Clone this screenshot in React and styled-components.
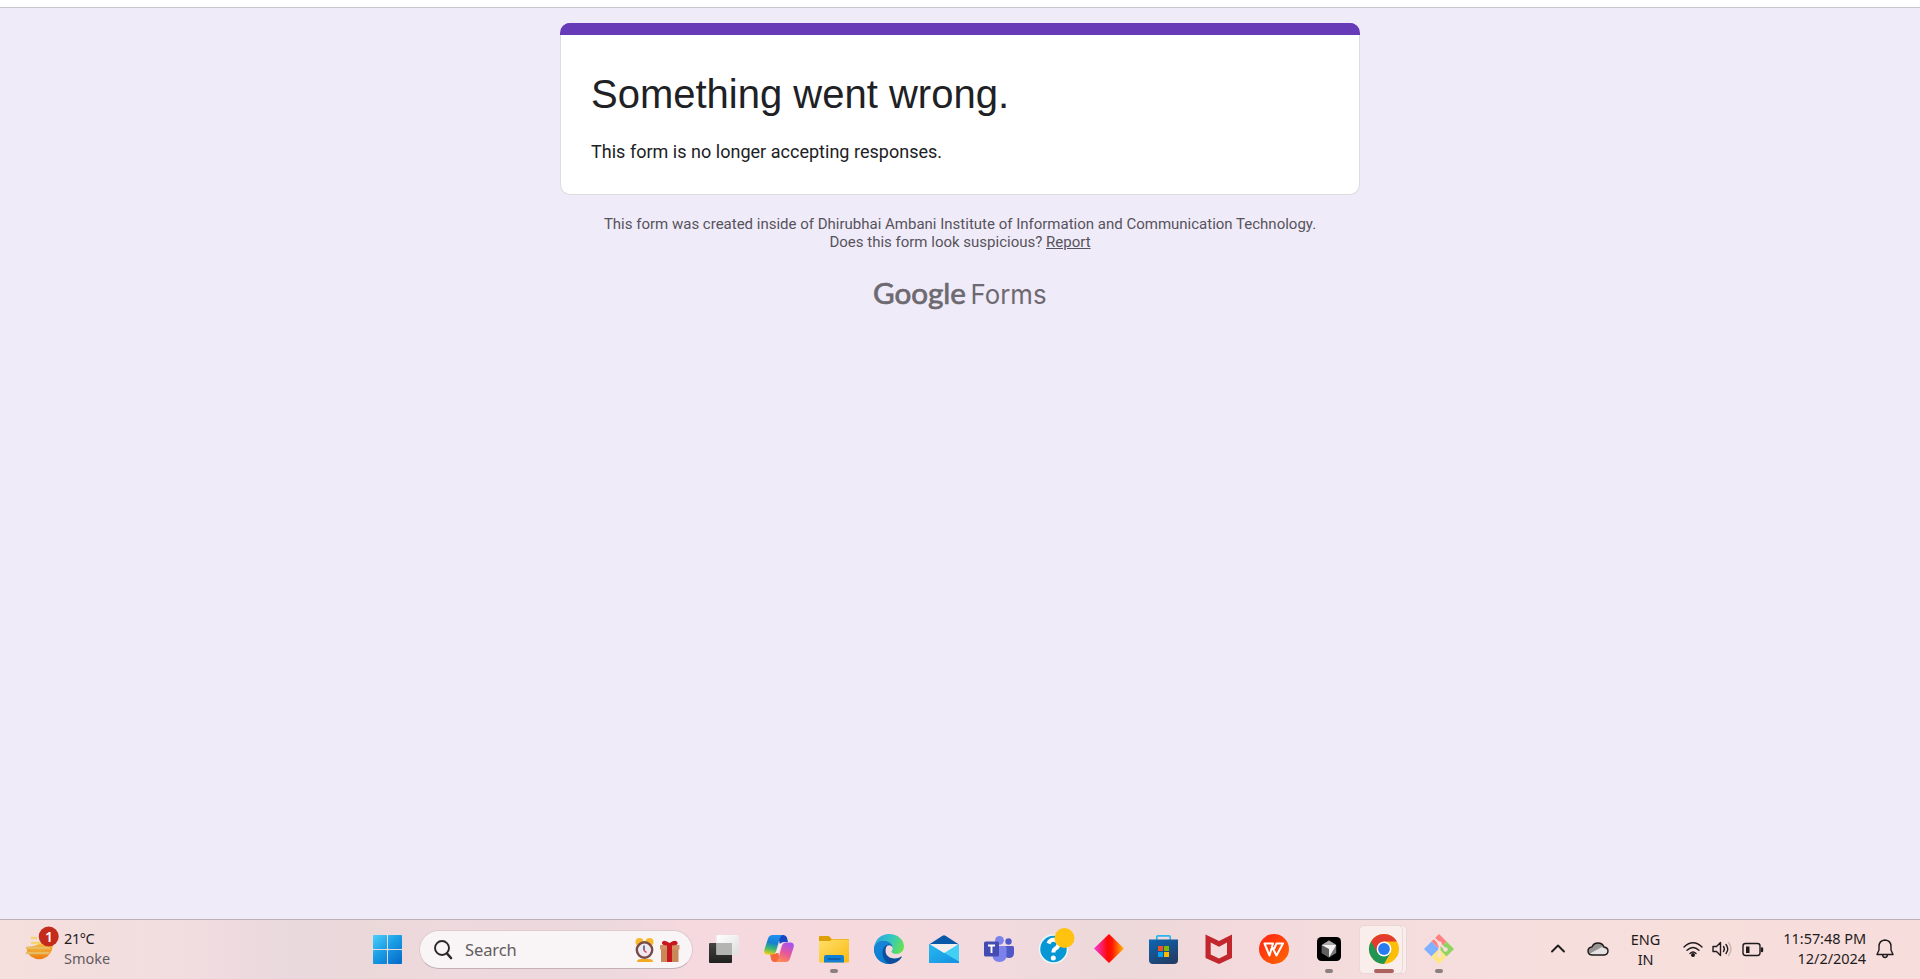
import React from "react";
import styled, { createGlobalStyle } from "styled-components";

const GlobalStyle = createGlobalStyle`
  * { box-sizing: border-box; }
  body { margin: 0; background: #f0ebf8; overflow: hidden; }
`;

const Screen = styled.div`
  display: flex;
  flex-direction: column;
  height: 979px;
  width: 1920px;
`;

const BrowserEdge = styled.div`
  height: 8px;
  flex: none;
  background: #fff;
  border-bottom: 1px solid #c9c6ce;
`;

const Page = styled.main`
  flex: 1;
  display: flex;
  flex-direction: column;
  align-items: center;
  padding-top: 15px;
  background: #f0ebf8;
  font-family: Roboto, "Liberation Sans", sans-serif;
`;

const Card = styled.section`
  width: 800px;
  height: 172px;
  background: #fff;
  border: 1px solid #dadce0;
  border-top: 12px solid #673ab7;
  border-radius: 10px;
  padding: 34px 30px 0;
  color: #202124;
  position: relative;
`;

const CardAccent = styled.div`
  position: absolute;
  top: -12px;
  left: -1px;
  right: -1px;
  height: 12px;
  background: #673ab7;
  border-radius: 10px 10px 0 0;
`;

const Title = styled.h1`
  margin: 0;
  font: 400 40px/50px "Liberation Sans", Arial, sans-serif;
  white-space: nowrap;
`;

const Message = styled.p`
  margin: 20px 0 0;
  font-size: 18px;
  line-height: 26px;
  letter-spacing: 0.02px;
  white-space: nowrap;
`;

const Notice = styled.p`
  margin: 20px 0 0;
  font-size: 15px;
  line-height: 18px;
  text-align: center;
  color: #56535c;
`;

const ReportLink = styled.a`
  color: inherit;
  text-decoration: underline;
`;

const Logo = styled.svg`
  display: block;
  margin-top: 20px;
  fill: #6c6971;
`;

const Taskbar = styled.footer`
  height: 60px;
  flex: none;
  display: flex;
  border-top: 1px solid #bfb0b5;
  background: linear-gradient(90deg, #f5e0dd 0, #f1dce0 200px, #e9d8dd 290px, #ebd8d9 370px, #eed9dd 440px, #ecd9dd 600px, #f5d9df 690px, #f6d9dd 850px, #f2dade 1000px, #ecd8d9 1120px, #f3d9dc 1230px, #f5dedd 1460px, #f7dfdc 1700px, #f7dddc 1920px);
  font-family: "Noto Sans", "Open Sans", sans-serif;
  font-size: 14.5px;
  color: #1f1b1c;
`;

const Weather = styled.div`
  width: 359px;
  display: flex;
  padding: 7px 0 0 24px;
`;

const WeatherIcon = styled.svg`
  flex: none;
  width: 40px;
  height: 42px;
  margin-top: -1px;
`;

const Lines = styled.div`
  display: flex;
  flex-direction: column;
  align-items: ${(p) => p.$align || "flex-start"};
  line-height: 20px;
  letter-spacing: -0.05px;
  white-space: nowrap;
`;

const WeatherText = styled(Lines)`
  padding-top: 1px;
  letter-spacing: -0.4px;
`;

const Muted = styled.span`
  color: #625b5d;
  letter-spacing: 0;
`;

const Apps = styled.nav`
  display: flex;
  align-items: center;
  height: 58px;
`;

const Slot = styled.div`
  position: relative;
  width: 55px;
  height: 58px;
  display: flex;
  align-items: center;
  justify-content: center;
`;

const AppIcon = styled.svg`
  display: block;
  position: relative;
  width: 32px;
  height: 32px;
`;

const Indicator = styled.i`
  position: absolute;
  bottom: 5px;
  width: ${(p) => (p.$active ? 20 : 8)}px;
  height: 4px;
  border-radius: 2px;
  background: ${(p) => (p.$active ? "#ad625f" : "#8b7f81")};
`;

const ActivePlate = styled.i`
  position: absolute;
  top: 5px;
  left: ${(p) => p.$left}px;
  width: ${(p) => p.$width}px;
  height: 49px;
  border: 1px solid #ead6d5;
  border-radius: 5px;
  background: #faeeec;
`;

const Search = styled.div`
  width: 274px;
  height: 39px;
  margin: 1px 3px 0 5px;
  display: flex;
  align-items: center;
  padding: 0 12px 0 13px;
  border: 1px solid #dfcace;
  border-bottom-color: #c3b2b5;
  border-radius: 20px;
  background: #f9f4f5;
  font-size: 16.5px;
  letter-spacing: -0.1px;
  color: #625d5e;
`;

const SearchLabel = styled.span`
  flex: 1;
  margin-left: 12px;
`;

const Tray = styled.div`
  margin-left: auto;
  height: 58px;
  display: flex;
  align-items: center;
  padding-right: 23px;
`;

const TrayIcon = styled.svg`
  flex: none;
  display: block;
  width: 24px;
  height: 24px;
  margin-left: ${(p) => p.$gap || 0}px;
  fill: none;
  stroke: #1f1b1c;
  stroke-width: 1.4;
  stroke-linecap: round;
  stroke-linejoin: round;
`;

const TrayText = styled(Lines)`
  margin-left: ${(p) => p.$gap}px;
  padding-bottom: ${(p) => p.$lift || 0}px;
`;

const StartIcon = () => (
  <AppIcon viewBox="0 0 32 32">
    <defs>
      <linearGradient id="win" gradientUnits="userSpaceOnUse" x1="1" y1="1" x2="26" y2="31">
        <stop offset="0" stopColor="#52d3fb" /><stop offset=".5" stopColor="#1a9ee6" /><stop offset="1" stopColor="#0670cd" />
      </linearGradient>
    </defs>
    <g fill="url(#win)">
      <rect x="2" y="2" width="14" height="14" rx=".8" /><rect x="17" y="2" width="14" height="14" rx=".8" />
      <rect x="2" y="17" width="14" height="14" rx=".8" /><rect x="17" y="17" width="14" height="14" rx=".8" />
    </g>
  </AppIcon>
);

const TaskViewIcon = () => (
  <AppIcon viewBox="0 0 32 32">
    <defs>
      <linearGradient id="tvd" x2="0" y2="1"><stop stopColor="#444543" /><stop offset="1" stopColor="#20211f" /></linearGradient>
      <linearGradient id="tvl" x2="1" y2="1"><stop stopColor="#fff" /><stop offset="1" stopColor="#dedede" /></linearGradient>
    </defs>
    <rect x="1" y="10" width="23" height="20" rx="1" fill="url(#tvd)" />
    <rect x="8.500" y="2" width="22.500" height="20" rx="1" fill="url(#tvl)" />
    <path d="M8.500 10H24V22H8.500z" fill="#b4b5b3" />
  </AppIcon>
);

const CopilotIcon = () => (
  <AppIcon viewBox="0 0 32 32">
    <defs>
      <linearGradient id="cpa" x1=".5" y1="0" x2=".3" y2="1"><stop stopColor="#2090f0" /><stop offset=".4" stopColor="#1680cf" /><stop offset=".7" stopColor="#3fb873" /><stop offset="1" stopColor="#f0cf10" /></linearGradient>
      <linearGradient id="cpb" x1=".7" y1="0" x2=".3" y2="1"><stop stopColor="#a552f2" /><stop offset=".5" stopColor="#e4579e" /><stop offset="1" stopColor="#ff8a50" /></linearGradient>
    </defs>
    <path d="M15 2h5.500q2.500 0 3.400 2.600L25 9h-4q-3 0-4 3z" fill="#1747c4" />
    <path d="M17 29h-5.500q-2.500 0-3.300-2.600L7 21h4q3 0 4-3z" fill="#f4683c" />
    <path d="M9.500 2H19.500q-2 .6-2.800 3.500L13.300 17.500q-1 4-4.500 4H4.500Q.5 21.500 1.300 17L5 5.500Q6.200 2 9.500 2z" fill="url(#cpa)" />
    <path d="M22.500 29H12.500q2-.6 2.800-3.500L18.700 13.500q1-4 4.500-4h4.300Q31.500 9.500 30.700 14L27 25.500Q25.800 29 22.500 29z" fill="url(#cpb)" />
    <path d="M16.500 10.500h3q-1.500 1-2.200 3.500L15.500 20h-3q1.200-1.200 1.800-3z" fill="#fbe9ee" />
  </AppIcon>
);

const FolderIcon = () => (
  <AppIcon viewBox="0 0 32 32">
    <defs><linearGradient id="fld" x2="1" y2="1"><stop stopColor="#ffdf6a" /><stop offset="1" stopColor="#fabb12" /></linearGradient></defs>
    <path d="M1 4q0-1 1-1h8q1 0 2 1l1.500 2H30q1 0 1 1v5H1z" fill="#dea007" />
    <path d="M1 8h11l2-1.500h16q1 0 1 1V28.500q0 1-1 1H2q-1 0-1-1z" fill="url(#fld)" />
    <path d="M6 29.500V24q0-2 2-2h16q2 0 2 2v5.500z" fill="#1180d4" />
    <path d="M9.500 26H22.500" stroke="#0b4f93" strokeWidth="1.200" />
  </AppIcon>
);

const EdgeIcon = () => (
  <AppIcon viewBox="0 0 32 32">
    <defs>
      <linearGradient id="eg1" x1="0" y1=".3" x2="1" y2=".6"><stop stopColor="#27a6df" /><stop offset=".5" stopColor="#34c6c4" /><stop offset="1" stopColor="#66e34f" /></linearGradient>
      <linearGradient id="eg2" x2=".6" y2="1"><stop stopColor="#1988d8" /><stop offset="1" stopColor="#087cd2" /></linearGradient>
    </defs>
    <path d="M1.200 14C2.400 6 8.500 1 16 1c8.500 0 15 5.500 15 12.500 0 4.500-3.500 7.500-7.700 7.500-3 0-4.800-1.200-4.800-2.500 0-.8 1.200-1.200 1.200-3.300C19.700 12 16 8 10.500 8 6 8 3 10.500 1.200 14z" fill="url(#eg1)" />
    <path d="M28.700 24.200C26 28.500 21.300 31 16.300 31 8 31 1 24.600 1 16 1 11.500 5.500 8 10.500 8c5 0 9.200 3.300 9.200 7-.3-1.500-1.700-2.700-3.500-2.700C13 12.300 12.600 16 12.600 18c0 5 4.500 7.400 9 7.400 2.800 0 4.600-.7 6-1.600.7-.5 1.400-.1 1.100.4z" fill="#0b4f9e" />
    <path d="M16.300 31C8 31 1 24.600 1 16 1 11.500 5.500 8 10.500 8c3.500 0 6.800 1.700 8.300 4.300-1-.6-1.700-.9-2.600-.9-4.200.4-6.700 3.600-6.700 8.100C9.500 25 12 29 16.300 31z" fill="url(#eg2)" />
  </AppIcon>
);

const MailIcon = () => (
  <AppIcon viewBox="0 0 32 32">
    <defs><linearGradient id="ml" x2="1" y2="1"><stop stopColor="#28b9f0" /><stop offset="1" stopColor="#1390df" /></linearGradient></defs>
    <path d="M1 11.500L14.500 2.700q1.500-1 3 0L31 11.500z" fill="#0758a8" />
    <path d="M1 11L16 20 31 11V30H1z" fill="#41cff5" />
    <path d="M1 11L31 28.500V30H1z" fill="url(#ml)" />
    <path d="M2 11h28L16 20z" fill="#f1efee" />
  </AppIcon>
);

const TeamsIcon = () => (
  <AppIcon viewBox="0 0 32 32">
    <circle cx="25.500" cy="8.500" r="3.200" fill="#5059c9" />
    <path d="M21 13h8.500q1.500 0 1.500 1.500V20q0 5-5 5-3 0-5-2z" fill="#4f58c5" />
    <circle cx="16.500" cy="7.300" r="4.400" fill="#7b83eb" />
    <path d="M9.500 13H22q1.500 0 1.500 1.500V22q0 7-7 7t-7-7z" fill="#7b83eb" />
    <rect x="1" y="8.500" width="15" height="15" rx="1.500" fill="#444cb3" />
    <path d="M5 12.500h7M8.500 12.500V20" stroke="#fff" strokeWidth="1.900" />
  </AppIcon>
);

const HelpIcon = () => (
  <AppIcon viewBox="0 0 32 32" overflow="visible">
    <circle cx="15.500" cy="16" r="14" fill="#0797d5" stroke="#eef7fa" strokeWidth="1.500" />
    <path d="M10.500 10.500Q12 6.500 16 6.800t4.500 4.200q0 2.800-2.600 4.300T15.400 19.500" fill="none" stroke="#fff" strokeWidth="4" />
    <circle cx="15.300" cy="25" r="2.500" fill="#fff" />
    <circle cx="26.500" cy="5" r="10" fill="#ffc20e" />
  </AppIcon>
);

const DiamondIcon = () => (
  <AppIcon viewBox="0 0 32 32">
    <defs><linearGradient id="dm"><stop stopColor="#f43ae0" /><stop offset=".45" stopColor="#ff0808" /><stop offset=".6" stopColor="#ff1600" /><stop offset="1" stopColor="#ffbd0d" /></linearGradient></defs>
    <path d="M16 1L31 15.500 16 30 1 15.500z" fill="url(#dm)" />
  </AppIcon>
);

const StoreIcon = () => (
  <AppIcon viewBox="0 0 32 32">
    <defs><linearGradient id="st" x2=".6" y2="1"><stop stopColor="#0b67b5" /><stop offset="1" stopColor="#233e68" /></linearGradient></defs>
    <path d="M8.800 7V4q0-1.200 1.200-1.200h11q1.200 0 1.200 1.200v3" fill="none" stroke="#28b7ee" strokeWidth="1.700" />
    <path d="M1 6.500h29V27q0 4-4 4H5q-4 0-4-4z" fill="url(#st)" />
    <path d="M10 13h5v5h-5z" fill="#f25022" /><path d="M16 13h5v5h-5z" fill="#7fba00" />
    <path d="M10 19h5v5h-5z" fill="#00a4ef" /><path d="M16 19h5v5h-5z" fill="#ffb900" />
  </AppIcon>
);

const ShieldIcon = () => (
  <AppIcon viewBox="0 0 32 32">
    <path d="M2.500 1.500L16 8l13-6.500V25L16 31 2.500 25z" fill="#c1272d" />
    <path d="M7.700 9.500L16 13.700l8-4.200V21.500L16 25.400 7.700 21.500z" fill="#f4dada" />
  </AppIcon>
);

const WpsIcon = () => (
  <AppIcon viewBox="0 0 32 32">
    <defs><linearGradient id="wps" x2="1" y2="1"><stop stopColor="#ff2014" /><stop offset="1" stopColor="#ff6a00" /></linearGradient></defs>
    <circle cx="16" cy="16" r="15" fill="url(#wps)" />
    <path d="M6.500 10.500H15L11.500 22.500zM13.500 13L18.500 22.500 25 10.500H18.500L16 16" fill="none" stroke="#fff" strokeWidth="2" strokeLinejoin="round" />
  </AppIcon>
);

const CubeIcon = () => (
  <AppIcon viewBox="0 0 32 32">
    <rect x="4" y="4" width="24" height="24" rx="4.500" fill="#000" />
    <path d="M16 7.500L23.200 12v8L16 24.500 8.800 20v-8z" fill="#777" />
    <path d="M16 7.500L23.200 12H8.800z" fill="#aaa" />
    <path d="M8.800 12L16 16v8.500L8.800 20z" fill="#606060" />
    <path d="M8.800 12h14.400L16 24.500V16z" fill="#f2f2f2" />
  </AppIcon>
);

const ChromeIcon = () => (
  <AppIcon viewBox="0 0 32 32">
    <circle cx="16" cy="16" r="15" fill="#fbbf0b" />
    <path d="M16 16L3 8.500A15 15 0 0 0 16 31L22.500 19.800z" fill="#219653" />
    <path d="M16 16L9.500 19.800 3 8.500A15 15 0 0 1 29 8.500H16z" fill="#e33b2e" />
    <circle cx="16" cy="16" r="7.400" fill="#fff" /><circle cx="16" cy="16" r="5.900" fill="#297bf0" />
  </AppIcon>
);

const GitIcon = () => (
  <AppIcon viewBox="0 0 32 32">
    <path d="M16 1L23.500 8.500 16 16 8.500 8.500z" fill="#ff8080" />
    <path d="M23.500 8.500L31 16l-7.500 7.500L16 16z" fill="#8ed45e" />
    <path d="M8.500 8.500L16 16l-7.500 7.500L1 16z" fill="#80b0ff" />
    <path d="M16 16l7.500 7.500L16 31l-7.500-7.500z" fill="#ffe680" />
    <path d="M11 5l5.500 5.500V22M17 11l5.500 5.500" fill="none" stroke="#f7dfdd" strokeWidth="2" />
    <g fill="#f7dfdd"><circle cx="16.500" cy="10.500" r="2.200" /><circle cx="16.500" cy="22.500" r="2.200" /><circle cx="22.500" cy="16.500" r="2.200" /></g>
  </AppIcon>
);

const APPS = [
  { id: "taskview", Icon: TaskViewIcon },
  { id: "copilot", Icon: CopilotIcon },
  { id: "files", Icon: FolderIcon, running: true },
  { id: "edge", Icon: EdgeIcon },
  { id: "mail", Icon: MailIcon },
  { id: "teams", Icon: TeamsIcon },
  { id: "help", Icon: HelpIcon },
  { id: "diamond", Icon: DiamondIcon },
  { id: "store", Icon: StoreIcon },
  { id: "shield", Icon: ShieldIcon },
  { id: "wps", Icon: WpsIcon },
  { id: "cube", Icon: CubeIcon, running: true },
  { id: "chrome", Icon: ChromeIcon, running: true, active: true },
  { id: "git", Icon: GitIcon, running: true },
];

export default function App() {
  return (
    <Screen>
      <GlobalStyle />
      <BrowserEdge />
      <Page>
        <Card>
          <CardAccent />
          <Title>Something went wrong.</Title>
          <Message>This form is no longer accepting responses.</Message>
        </Card>
        <Notice>
          This form was created inside of Dhirubhai Ambani Institute of Information and Communication Technology.
          <br />
          Does this form look suspicious? <ReportLink>Report</ReportLink>
        </Notice>
        <Logo width="180" height="50" viewBox="0 0 180 50">
          <text x="3" y="32.500" fontFamily="Lato, sans-serif" fontSize="29.500" stroke="#6c6971" strokeWidth=".7" textLength="93" lengthAdjust="spacingAndGlyphs">Google</text>
          <text x="100.500" y="33" fontFamily="Inter, sans-serif" fontSize="26.500" textLength="76" lengthAdjust="spacingAndGlyphs">Forms</text>
        </Logo>
      </Page>
      <Taskbar>
        <Weather>
          <WeatherIcon viewBox="0 0 40 42">
            <defs><linearGradient id="sun" x2="0" y2="1"><stop stopColor="#f8c63d" /><stop offset="1" stopColor="#ef7b16" /></linearGradient></defs>
            <path d="M3 21Q16 20 18 14h11.500q0 11-6 16.500Q15 36 7 30.500Q4 28 3 25z" fill="url(#sun)" />
            <g strokeWidth="2.600" strokeLinecap="round" fill="none">
              <path d="M8 12h4M8 17h12" stroke="#f5d36d" />
              <path d="M3 22h22M3 27h21" stroke="#e6bd63" />
              <path d="M8 24.500h9" stroke="#f2a92b" strokeWidth="1.600" />
            </g>
            <circle cx="24.700" cy="10.500" r="10" fill="#c42b1c" />
            <text x="24.900" y="15.500" fontSize="14" fontWeight="600" fill="#fff" textAnchor="middle">1</text>
          </WeatherIcon>
          <WeatherText>
            <span>21°C</span>
            <Muted>Smoke</Muted>
          </WeatherText>
        </Weather>
        <Apps>
          <Slot><StartIcon /></Slot>
          <Search>
            <svg width="20" height="22" viewBox="0 0 20 22" fill="none" stroke="#292728" strokeLinecap="round">
              <circle cx="9" cy="9" r="7" strokeWidth="1.900" /><path d="M14 14.500L18 19" strokeWidth="2.600" />
            </svg>
            <SearchLabel>Search</SearchLabel>
            <svg width="46" height="26" viewBox="0 0 46 26">
              <g>
                <circle cx="5.500" cy="5" r="4" fill="#f8b92c" /><circle cx="15.500" cy="5" r="4" fill="#f8b92c" />
                <path d="M3 25q0-3 4-3h8q4 0 4 3z" fill="#f3aa20" />
                <circle cx="10.500" cy="13" r="7.700" fill="#efe9ef" stroke="#784b4b" strokeWidth="2.400" />
                <path d="M10 8.500v5" stroke="#333a55" strokeWidth="1.300" /><path d="M10 13.500l2.500 2" stroke="#e33d62" strokeWidth="1.600" />
              </g>
              <path d="M27 8h17.500v17H27z" fill="#c98858" /><path d="M26 8h19.500v4.500H26z" fill="#d29464" />
              <path d="M33 8h5v17h-5z" fill="#c9171e" />
              <path d="M35.500 8.500Q27 9 28 5.500T35.500 6Q42 2 43.500 5.500T35.500 8.500z" fill="#c9171e" />
            </svg>
          </Search>
          {APPS.map(({ id, Icon, running, active }) => (
            <Slot key={id}>
              {active && <ActivePlate $left={10} $width={41} />}
              {active && <ActivePlate $left={3} $width={44} />}
              <Icon />
              {running && <Indicator $active={active} />}
            </Slot>
          ))}
        </Apps>
        <Tray>
          <TrayIcon viewBox="0 0 24 24"><path d="M6 14.500L12 8.500l6 6" strokeWidth="1.900" /></TrayIcon>
          <TrayIcon $gap={16} viewBox="0 0 24 24">
            <path d="M6.500 18q-4.500 0-4.500-4 0-3.500 4-4 1.500-4 6-4t6 4q4 .5 4 4t-4 4z" fill="#979494" stroke="none" />
            <path d="M4 16.500L16 10l5.500 3v4L18 18.500H6z" fill="#e6e2e2" stroke="none" />
            <path d="M6.500 18q-4.500 0-4.500-4 0-3.500 4-4 1.500-4 6-4t6 4q4 .5 4 4t-4 4z" />
          </TrayIcon>
          <TrayText $gap={21} $align="center"><span>ENG</span><span>IN</span></TrayText>
          <TrayIcon $gap={21} viewBox="0 0 24 24">
            <path d="M3 10Q12 1.500 21 10M6 13.300q6-5.600 12 0M9 16.500q3-3 6 0" /><circle cx="12" cy="18" r="1.300" fill="#1f1b1c" />
          </TrayIcon>
          <TrayIcon $gap={5} viewBox="0 0 24 24">
            <path d="M3 9.500h3.500L10.500 5.500v13L6.500 14.500H3z" /><path d="M13.500 9.500q1.800 2.500 0 5M16 7.500q3.500 4.500 0 9" /><path d="M18.500 5.500q5 6.500 0 13" stroke="#c8b5b3" />
          </TrayIcon>
          <TrayIcon $gap={7} viewBox="0 0 24 24">
            <rect x="2" y="6.500" width="17" height="12" rx="2.400" /><path d="M5 9.500h3.500v6.500H5z" fill="#1f1b1c" stroke="none" /><path d="M21 11.500v2.500" strokeWidth="2.400" />
          </TrayIcon>
          <TrayText $gap={18} $lift={2} $align="flex-end"><span>11:57:48 PM</span><span>12/2/2024</span></TrayText>
          <TrayIcon $gap={7} viewBox="0 0 24 24">
            <path d="M4 17.500L6 13V9.500q0-6 6-6.500 6 .5 6 6.500V13l2 4.500zM9.500 18q.5 2.500 2.500 2.500t2.500-2.500" />
          </TrayIcon>
        </Tray>
      </Taskbar>
    </Screen>
  );
}
